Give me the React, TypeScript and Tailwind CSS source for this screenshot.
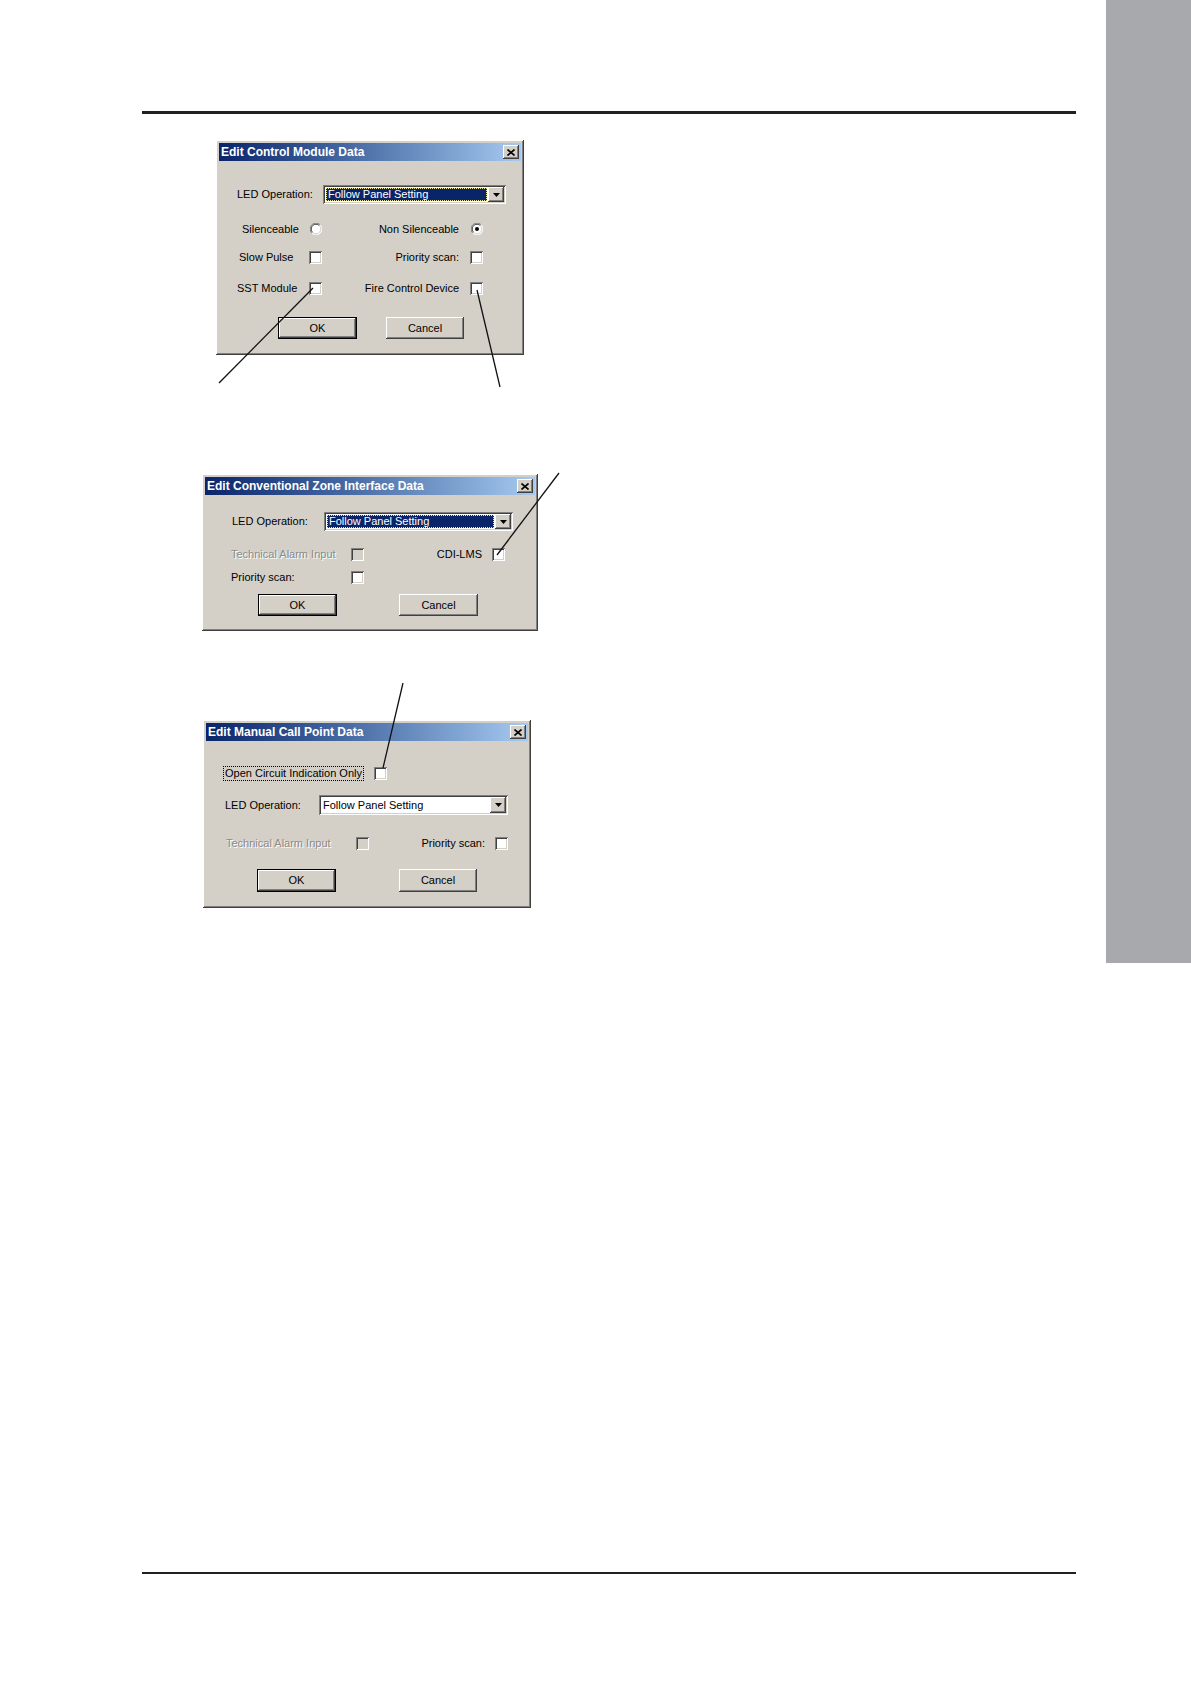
import React from "react";

const raised =
  "shadow-[inset_-1px_-1px_0_#404040,inset_1px_1px_0_#ffffff,inset_-2px_-2px_0_#808080,inset_2px_2px_0_#d4d0c8]";
const sunken =
  "shadow-[inset_1px_1px_0_#808080,inset_-1px_-1px_0_#ffffff,inset_2px_2px_0_#404040,inset_-2px_-2px_0_#d4d0c8]";

function Dialog({
  title,
  width,
  children,
}: {
  title: string;
  width: string;
  children: React.ReactNode;
}) {
  return (
    <div className={`${width} bg-[#d4d0c8] p-[3px] ${raised}`}>
      <div className="flex h-[18px] items-center justify-between bg-gradient-to-r from-[#0a246a] to-[#a6caf0] pl-[2px] pr-[2px]">
        <span className="text-[12px] font-bold leading-none text-white">{title}</span>
        <CloseButton />
      </div>
      {children}
    </div>
  );
}

function CloseButton() {
  return (
    <span className={`flex h-[14px] w-[16px] items-center justify-center bg-[#d4d0c8] ${raised}`}>
      <svg width="8" height="7" viewBox="0 0 8 7">
        <path d="M0.5 0.5L7.5 6.5M7.5 0.5L0.5 6.5" stroke="#000" strokeWidth="1.6" />
      </svg>
    </span>
  );
}

function Check({ disabled = false }: { disabled?: boolean }) {
  return (
    <span
      className={`block h-[13px] w-[13px] shrink-0 ${disabled ? "bg-[#d4d0c8]" : "bg-white"} ${sunken}`}
    />
  );
}

function Radio({ checked = false }: { checked?: boolean }) {
  return (
    <svg width="12" height="12" viewBox="0 0 12 12" className="shrink-0">
      <circle cx="6" cy="6" r="5.5" fill="#ffffff" />
      <path d="M1.8 10.2A5.5 5.5 0 0 1 10.2 1.8" fill="none" stroke="#808080" strokeWidth="1" />
      <path d="M10.2 1.8A5.5 5.5 0 0 1 1.8 10.2" fill="none" stroke="#ffffff" strokeWidth="1" />
      <path d="M2.6 9.4A4.5 4.5 0 0 1 9.4 2.6" fill="none" stroke="#404040" strokeWidth="1" />
      <path d="M9.4 2.6A4.5 4.5 0 0 1 2.6 9.4" fill="none" stroke="#d4d0c8" strokeWidth="1" />
      {checked && <circle cx="6" cy="6" r="2" fill="#000" />}
    </svg>
  );
}

function Combo({ width, height, selected }: { width: string; height: string; selected: boolean }) {
  return (
    <div className={`flex ${width} ${height} bg-white p-[2px] ${sunken}`}>
      <div className="flex flex-1 p-[1px]">
        <span
          className={`flex flex-1 items-center pl-[1px] text-[11px] leading-none ${
            selected
              ? "border border-dotted border-[#e8e4a0] bg-[#0a246a] text-white"
              : "text-black"
          }`}
        >
          Follow Panel Setting
        </span>
      </div>
      <span className={`flex w-[16px] items-center justify-center bg-[#d4d0c8] ${raised}`}>
        <svg width="7" height="4" viewBox="0 0 7 4">
          <path d="M0 0H7L3.5 4Z" fill="#000" />
        </svg>
      </span>
    </div>
  );
}

function Button({ label, isDefault = false, width, height }: { label: string; isDefault?: boolean; width: string; height: string }) {
  return (
    <span
      className={`flex ${width} ${height} items-center justify-center bg-[#d4d0c8] text-[11px] leading-none text-black ${
        isDefault
          ? "shadow-[inset_0_0_0_1px_#000000,inset_-2px_-2px_0_#404040,inset_2px_2px_0_#ffffff,inset_-3px_-3px_0_#808080]"
          : raised
      }`}
    >
      {label}
    </span>
  );
}

const disabledText = "text-[#8a8a8a] [text-shadow:1px_1px_0_#ffffff]";

export default function App() {
  return (
    <div className="relative flex h-[1684px] w-[1191px] overflow-hidden bg-white font-['Liberation_Sans',Arial,sans-serif] text-[11px] text-black">
      <div className="w-[1106px] pl-[142px] pt-[111px]">
        <div className="flex w-[934px] flex-col">
          <div className="h-[3px] bg-[#231f20]" />

          {/* Control module */}
          <div className="ml-[74px] mt-[26px]">
            <Dialog title="Edit Control Module Data" width="w-[308px]">
              <div className="flex h-[191px] flex-col">
                <div className="ml-[18px] mt-[24px] flex items-center">
                  <span className="w-[86px]">LED Operation:</span>
                  <Combo width="w-[183px]" height="h-[19px]" selected />
                </div>
                <div className="ml-[20px] mt-[17px] flex h-4 items-center">
                  <span className="w-[70px] pl-[3px]">Silenceable</span>
                  <span className="flex w-[13px] justify-center">
                    <Radio />
                  </span>
                  <span className="w-[137px] text-right">Non Silenceable</span>
                  <span className="ml-[11px] flex w-[13px] justify-center">
                    <Radio checked />
                  </span>
                </div>
                <div className="ml-[20px] mt-[12px] flex h-4 items-center">
                  <span className="w-[70px]">Slow Pulse</span>
                  <Check />
                  <span className="w-[137px] text-right">Priority scan:</span>
                  <span className="ml-[11px]">
                    <Check />
                  </span>
                </div>
                <div className="ml-[18px] mt-[15px] flex h-4 items-center">
                  <span className="w-[72px]">SST Module</span>
                  <Check />
                  <span className="w-[137px] text-right">Fire Control Device</span>
                  <span className="ml-[11px]">
                    <Check />
                  </span>
                </div>
                <div className="ml-[59px] mt-[21px] flex gap-[29px]">
                  <Button label="OK" isDefault width="w-[79px]" height="h-[22px]" />
                  <Button label="Cancel" width="w-[78px]" height="h-[22px]" />
                </div>
              </div>
            </Dialog>
          </div>

          {/* Conventional zone interface */}
          <div className="ml-[60px] mt-[119px]">
            <Dialog title="Edit Conventional Zone Interface Data" width="w-[336px]">
              <div className="flex h-[133px] flex-col">
                <div className="ml-[27px] mt-[17px] flex items-center">
                  <span className="w-[92px]">LED Operation:</span>
                  <Combo width="w-[189px]" height="h-[19px]" selected />
                </div>
                <div className="ml-[26px] mt-[15px] flex h-4 items-center">
                  <span className={`w-[120px] ${disabledText}`}>Technical Alarm Input</span>
                  <Check disabled />
                  <span className="w-[118px] text-right">CDI-LMS</span>
                  <span className="ml-[10px]">
                    <Check />
                  </span>
                </div>
                <div className="ml-[26px] mt-[7px] flex h-4 items-center">
                  <span className="w-[120px]">Priority scan:</span>
                  <Check />
                </div>
                <div className="ml-[53px] mt-[9px] flex gap-[62px]">
                  <Button label="OK" isDefault width="w-[79px]" height="h-[22px]" />
                  <Button label="Cancel" width="w-[79px]" height="h-[22px]" />
                </div>
              </div>
            </Dialog>
          </div>

          {/* Manual call point */}
          <div className="ml-[61px] mt-[89px]">
            <Dialog title="Edit Manual Call Point Data" width="w-[328px]">
              <div className="flex h-[164px] flex-col">
                <div className="ml-[17px] mt-[24px] flex h-4 items-center">
                  <span className="border border-dotted border-black px-[1px] leading-[13px]">
                    Open Circuit Indication Only
                  </span>
                  <span className="ml-[10px]">
                    <Check />
                  </span>
                </div>
                <div className="ml-[19px] mt-[14px] flex items-center">
                  <span className="w-[94px]">LED Operation:</span>
                  <Combo width="w-[189px]" height="h-[20px]" selected={false} />
                </div>
                <div className="ml-[20px] mt-[20px] flex h-4 items-center">
                  <span className={`w-[130px] ${disabledText}`}>Technical Alarm Input</span>
                  <Check disabled />
                  <span className="w-[116px] text-right">Priority scan:</span>
                  <span className="ml-[10px]">
                    <Check />
                  </span>
                </div>
                <div className="ml-[51px] mt-[18px] flex gap-[63px]">
                  <Button label="OK" isDefault width="w-[79px]" height="h-[23px]" />
                  <Button label="Cancel" width="w-[78px]" height="h-[23px]" />
                </div>
              </div>
            </Dialog>
          </div>

          <div className="mt-[664px] h-[2px] bg-[#231f20]" />
        </div>
      </div>

      <div className="w-[85px]">
        <div className="h-[963px] bg-[#a8a9ad]" />
      </div>

      {/* leader lines */}
      <svg className="pointer-events-none absolute left-0 top-0" width="1191" height="1684">
        <g stroke="#111" strokeWidth="1.3">
          <line x1="313" y1="288" x2="219" y2="383" />
          <line x1="477" y1="290" x2="500" y2="387" />
          <line x1="497" y1="555" x2="559" y2="473" />
          <line x1="383" y1="768" x2="403" y2="683" />
        </g>
      </svg>
    </div>
  );
}
